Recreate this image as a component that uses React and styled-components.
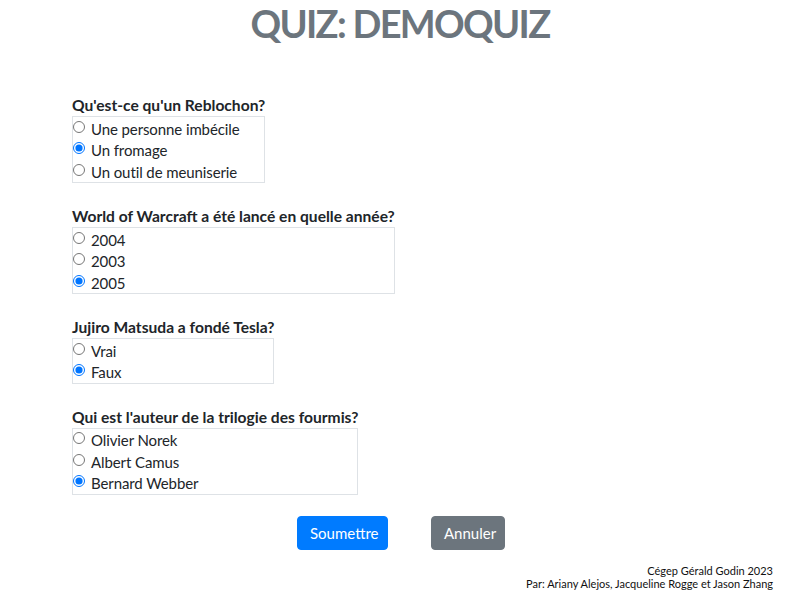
import React from "react";
import styled, { createGlobalStyle } from "styled-components";

const Global = createGlobalStyle`
  html, body { margin: 0; padding: 0; background: #fff; }
  body {
    font-family: Lato, "Noto Sans", sans-serif;
    font-size: 16px;
    color: #212529;
  }
`;

const Page = styled.div`
  width: 800px;
  min-height: 600px;
  display: flex;
  flex-direction: column;
`;

const Title = styled.h1`
  margin: 0;
  text-align: center;
  font-size: 38px;
  letter-spacing: -1.7px;
  line-height: 46px;
  font-weight: 700;
  color: #6c757d;
`;

const Form = styled.form`
  display: flex;
  flex-direction: column;
  align-items: flex-start;
  padding: 49px 0 0 72px;
`;

const Question = styled.div`
  display: inline-flex;
  flex-direction: column;
  margin-bottom: 23px;
`;

const Label = styled.div`
  font-weight: 700;
  font-size: 15.6px;
  line-height: 21px;
  color: #212529;
`;

const Options = styled.div`
  border: 1px solid #dee2e6;
  display: flex;
  flex-direction: column;
`;

const Option = styled.label`
  box-sizing: border-box;
  display: flex;
  align-items: center;
  height: 21.7px;
  line-height: 20px;
  padding-top: 1.5px;
  font-size: 15px;
  letter-spacing: -0.1px;
  color: #212529;
`;

const Radio = styled.input`
  width: 12px;
  height: 12px;
  margin: 0 6px 4px 0;
`;

const Buttons = styled.div`
  display: flex;
  justify-content: center;
  gap: 43px;
  padding-left: 2px;
  margin-top: -2px;
`;

const Button = styled.button`
  font-family: inherit;
  font-size: 15px;
  line-height: 20px;
  padding: 6px 12px;
  border: 1px solid ${(p) => p.$bg};
  border-radius: 4px;
  background: ${(p) => p.$bg};
  color: #fff;
  width: ${(p) => p.$w}px;
`;

const Footer = styled.footer`
  text-align: right;
  font-size: 11px;
  line-height: 13px;
  color: #111;
  padding: 14px 27px 0 0;
`;

const questions = [
  { q: "Qu'est-ce qu'un Reblochon?", opts: ["Une personne imbécile", "Un fromage", "Un outil de meuniserie"], c: 1 },
  { q: "World of Warcraft a été lancé en quelle année?", opts: ["2004", "2003", "2005"], c: 2 },
  { q: "Jujiro Matsuda a fondé Tesla?", opts: ["Vrai", "Faux"], c: 1 },
  { q: "Qui est l'auteur de la trilogie des fourmis?", opts: ["Olivier Norek", "Albert Camus", "Bernard Webber"], c: 2 },
];

export default function App() {
  return (
    <Page>
      <Global />
      <Title>QUIZ: DEMOQUIZ</Title>
      <Form onSubmit={(e) => e.preventDefault()}>
        {questions.map((item, i) => (
          <Question key={i}>
            <Label>{item.q}</Label>
            <Options>
              {item.opts.map((o, j) => (
                <Option key={j}>
                  <Radio type="radio" name={"q" + i} defaultChecked={j === item.c} />
                  {o}
                </Option>
              ))}
            </Options>
          </Question>
        ))}
      </Form>
      <Buttons>
        <Button $bg="#007bff" $w={91}>Soumettre</Button>
        <Button $bg="#6c757d" $w={74}>Annuler</Button>
      </Buttons>
      <Footer>
        Cégep Gérald Godin 2023
        <br />
        Par: Ariany Alejos, Jacqueline Rogge et Jason Zhang
      </Footer>
    </Page>
  );
}
